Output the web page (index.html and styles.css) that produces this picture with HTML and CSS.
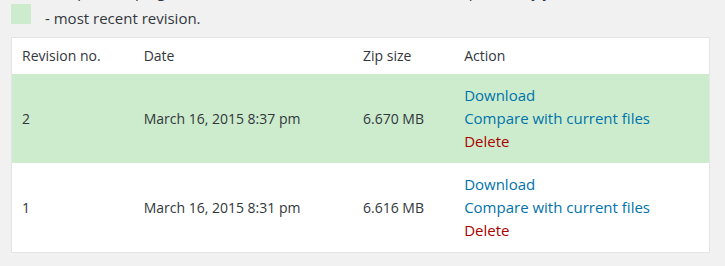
FILE: index.html
```html
<!DOCTYPE html>
<html>
<head>
<meta charset="utf-8">
<link rel="stylesheet" href="styles.css">
</head>
<body>
<div class="wrap">
  <p class="intro">A backup of the plugin is made each time its files are edited or updated by you.</p>
  <div class="legend">
    <span class="swatch"></span>
    <span class="legend-text">- most recent revision.</span>
  </div>
  <table class="revisions">
    <colgroup>
      <col class="c-rev">
      <col class="c-date">
      <col class="c-size">
      <col class="c-action">
    </colgroup>
    <thead>
      <tr>
        <th>Revision no.</th>
        <th>Date</th>
        <th>Zip size</th>
        <th>Action</th>
      </tr>
    </thead>
    <tbody>
      <tr class="recent">
        <td>2</td>
        <td>March 16, 2015 8:37 pm</td>
        <td>6.670 MB</td>
        <td>
          <a href="#" class="act">Download</a>
          <a href="#" class="act">Compare with current files</a>
          <a href="#" class="act del">Delete</a>
        </td>
      </tr>
      <tr>
        <td>1</td>
        <td>March 16, 2015 8:31 pm</td>
        <td>6.616 MB</td>
        <td>
          <a href="#" class="act">Download</a>
          <a href="#" class="act">Compare with current files</a>
          <a href="#" class="act del">Delete</a>
        </td>
      </tr>
    </tbody>
  </table>
</div>
</body>
</html>
```

FILE: styles.css
```css
html, body {
  margin: 0;
  padding: 0;
  background: #f1f1f1;
}
body {
  font-family: "Open Sans", "Noto Sans", sans-serif;
  font-size: 14px;
  color: #32373c;
  overflow: hidden;
}
.wrap {
  padding: 0 15px 0 11px;
}
.intro {
  margin: -19px 0 -1px 11px;
  font-size: 15px;
  line-height: 20px;
  height: 20px;
  overflow: hidden;
}
.legend {
  display: flex;
  align-items: flex-start;
}
.swatch {
  width: 20px;
  height: 20px;
  margin-top: 4px;
  background: #cdeccd;
}
.legend-text {
  margin-left: 14px;
  margin-top: 8px;
  font-size: 15px;
  line-height: 20px;
}
.revisions {
  margin-top: 9px;
  width: 699px;
  table-layout: fixed;
  border-collapse: collapse;
  background: #fff;
  border: 1px solid #e5e5e5;
  box-shadow: 0 1px 1px rgba(0,0,0,0.04);
}
.c-rev { width: 122px; }
.c-date { width: 219px; }
.c-size { width: 101px; }
.c-action { width: 255px; }
.revisions th {
  text-align: left;
  font-weight: normal;
  padding: 8px 10px;
  line-height: 20px;
  color: #32373c;
}
.revisions td {
  padding: 10px;
  line-height: 23px;
  vertical-align: middle;
  color: #32373c;
}
.revisions tr.recent td {
  background: #cdeccd;
}
.act {
  display: block;
  font-size: 15px;
  color: #0073aa;
  text-decoration: none;
}
.act.del {
  color: #a00;
}
```
